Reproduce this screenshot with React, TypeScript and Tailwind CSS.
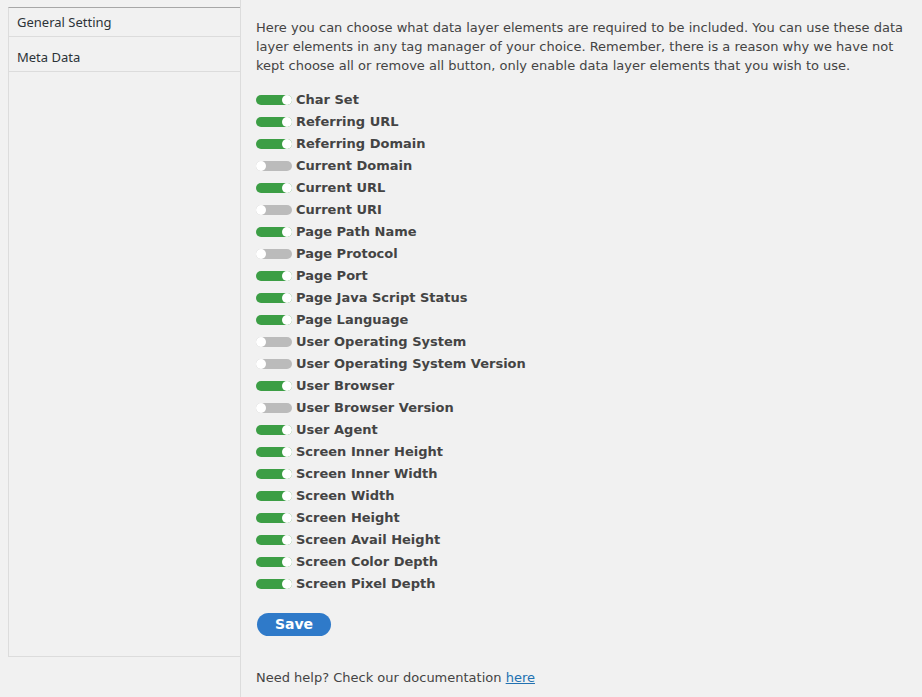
import { useState } from "react";

const items: [string, boolean][] = [
  ["Char Set", true],
  ["Referring URL", true],
  ["Referring Domain", true],
  ["Current Domain", false],
  ["Current URL", true],
  ["Current URI", false],
  ["Page Path Name", true],
  ["Page Protocol", false],
  ["Page Port", true],
  ["Page Java Script Status", true],
  ["Page Language", true],
  ["User Operating System", false],
  ["User Operating System Version", false],
  ["User Browser", true],
  ["User Browser Version", false],
  ["User Agent", true],
  ["Screen Inner Height", true],
  ["Screen Inner Width", true],
  ["Screen Width", true],
  ["Screen Height", true],
  ["Screen Avail Height", true],
  ["Screen Color Depth", true],
  ["Screen Pixel Depth", true],
];

const Toggle = ({ on, onClick }: { on: boolean; onClick: () => void }) => (
  <button
    onClick={onClick}
    className={`relative h-[10px] w-[36px] shrink-0 rounded-full ${on ? "bg-[#3c9e45]" : "bg-[#bbbbbb]"}`}
  >
    <span
      className={`absolute top-0 h-[10px] w-[10px] rounded-full bg-white ${on ? "right-0" : "left-0"}`}
    />
  </button>
);

const App = () => {
  const [state, setState] = useState(items.map(([, v]) => v));

  return (
    <div className="flex min-h-[697px] bg-[#f1f1f1] pl-2 text-[#3c434a]">
      <div className="mt-[7px] h-[650px] w-[232px] border-t border-l border-b border-t-[#a7a7a7] border-l-[#dcdcdc] border-b-[#dcdcdc] font-['Noto_Sans',sans-serif] text-[13px]">
        <div className="flex h-[29px] items-center border-b border-[#dcdcdc] px-2 pt-[2px] text-[#2c3338]">General Setting</div>
        <div className="flex h-[35px] items-center border-b border-[#dcdcdc] px-2 pt-[8px] text-[#2c3338]">Meta Data</div>
      </div>
      <div className="flex-1 border-l border-[#dcdcdc] pl-[15px] pr-4 pt-[18px] font-['DejaVu_Sans',Verdana,sans-serif]">
        <p className="text-[13px] leading-[19px] text-[#444]">
          Here you can choose what data layer elements are required to be included. You can use these data layer elements in any tag manager of your choice. Remember, there is a reason why we have not kept choose all or remove all button, only enable data layer elements that you wish to use.
        </p>
        <div className="mt-[14px] flex flex-col">
          {items.map(([label], i) => (
            <div key={label} className="flex h-[22px] items-center gap-1">
              <Toggle
                on={state[i]}
                onClick={() => setState((s) => s.map((v, j) => (j === i ? !v : v)))}
              />
              <span className="text-[13px] font-bold text-[#444]">{label}</span>
            </div>
          ))}
        </div>
        <button className="ml-px mt-[18px] h-[23px] w-[74px] rounded-full bg-[#2f7ac9] text-[14px] font-bold text-white">
          Save
        </button>
        <p className="mt-[32px] text-[13px] text-[#444]">
          Need help? Check our documentation{" "}
          <a href="#" className="text-[#2271b1] underline">here</a>
        </p>
      </div>
    </div>
  );
};

export default App;
